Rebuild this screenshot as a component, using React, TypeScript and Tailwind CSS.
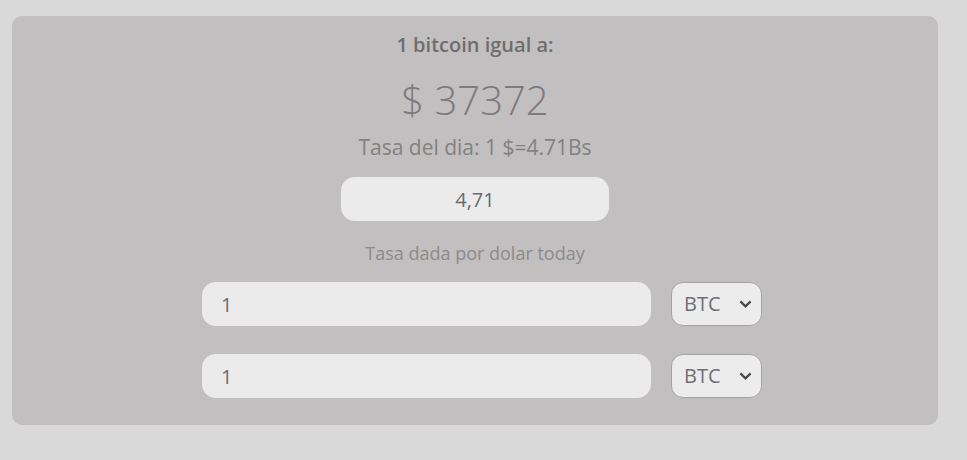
import { useState } from "react";

const font = { fontFamily: '"Open Sans", "Noto Sans", sans-serif' };

function CurrencySelect({ value, onChange }: { value: string; onChange: (v: string) => void }) {
  return (
    <div className="relative w-[91px] h-[44px]">
      <select
        value={value}
        onChange={(e) => onChange(e.target.value)}
        className="appearance-none w-full h-full pl-[12px] pr-8 bg-[#ececec] rounded-[12px] border border-[#a3a3a3] text-[20px] text-[#6f6f78] outline-none"
      >
        <option value="BTC">BTC</option>
        <option value="USD">USD</option>
        <option value="BS">BS</option>
      </select>
      <svg
        className="absolute right-[10px] top-1/2 -translate-y-1/2 pointer-events-none"
        width="13"
        height="8"
        viewBox="0 0 13 8"
      >
        <path d="M1.4 1.4 L6.5 6.3 L11.6 1.4" fill="none" stroke="#4a4a4a" strokeWidth="2.3" />
      </svg>
    </div>
  );
}

export default function App() {
  const [rate, setRate] = useState("4,71");
  const [top, setTop] = useState("1");
  const [bottom, setBottom] = useState("1");
  const [topCur, setTopCur] = useState("BTC");
  const [bottomCur, setBottomCur] = useState("BTC");

  return (
    <div className="min-h-[460px] bg-[#d9d9d9] pt-[16px] px-[12px]" style={font}>
      <div className="w-[926px] h-[409px] bg-[#c1bfbf] rounded-[10px] flex flex-col items-center pt-[16px]">
        <h2 className="text-[20px] font-semibold text-[#6e6e6e] leading-[26px]">1 bitcoin igual a:</h2>
        <p className="mt-[18px] text-[40px] font-light text-[#7b7b7b] leading-[48px]">$ 37372</p>
        <p className="mt-[9px] text-[21px] text-[#828282] leading-[28px]">Tasa del dia: 1 $=4.71Bs</p>
        <input
          value={rate}
          onChange={(e) => setRate(e.target.value)}
          className="mt-[16px] w-[268px] h-[44px] rounded-[14px] bg-[#ebebeb] text-center text-[20px] text-[#6a6a72] outline-none"
        />
        <p className="mt-[19px] text-[18px] text-[#8b8b8b] leading-[26px]">Tasa dada por dolar today</p>
        <div className="mt-[16px] flex flex-col gap-[28px] ml-[14px]">
          <div className="flex gap-[20px]">
            <input
              value={top}
              onChange={(e) => setTop(e.target.value)}
              className="w-[449px] h-[44px] rounded-[14px] bg-[#ebebeb] pl-[19px] text-[20px] text-[#6a6a72] outline-none"
            />
            <CurrencySelect value={topCur} onChange={setTopCur} />
          </div>
          <div className="flex gap-[20px]">
            <input
              value={bottom}
              onChange={(e) => setBottom(e.target.value)}
              className="w-[449px] h-[44px] rounded-[14px] bg-[#ebebeb] pl-[19px] text-[20px] text-[#6a6a72] outline-none"
            />
            <CurrencySelect value={bottomCur} onChange={setBottomCur} />
          </div>
        </div>
      </div>
    </div>
  );
}
